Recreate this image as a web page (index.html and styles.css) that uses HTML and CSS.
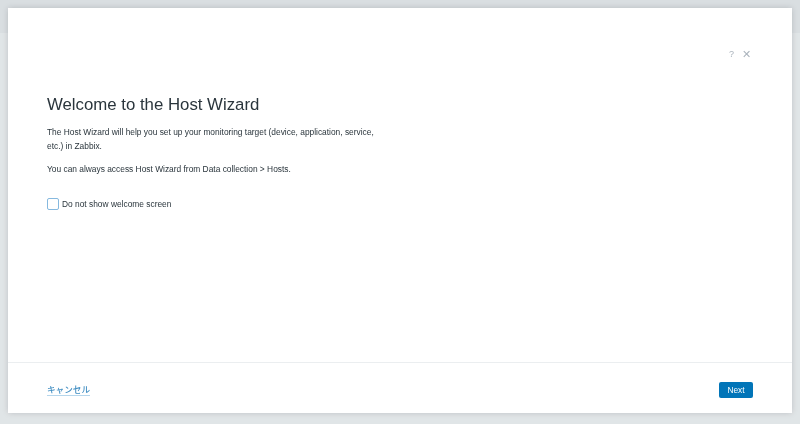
FILE: index.html
```html
<!DOCTYPE html>
<html lang="en">
<head>
    <meta charset="UTF-8">
    <meta name="viewport" content="width=device-width, initial-scale=1.0">
    <title>Host Wizard</title>
    <link rel="stylesheet" href="styles.css">
</head>
<body>
    <div class="page-bg">
        <div class="page-top"></div>
    </div>

    <!-- Wizard dialog -->
    <div class="overlay">
        <div class="dialog">
            <div class="dialog-head">
                <span class="head-btn help">?</span>
                <span class="head-btn close">&#x2715;</span>
            </div>
            <div class="dialog-body">
                <h1>Welcome to the Host Wizard</h1>
                <p>The Host Wizard will help you set up your monitoring target (device, application, service, etc.) in Zabbix.</p>
                <p>You can always access Host Wizard from Data collection &gt; Hosts.</p>
                <label class="check">
                    <span class="box"></span>
                    Do not show welcome screen
                </label>
            </div>
            <div class="dialog-foot">
                <a class="cancel" href="#">キャンセル</a>
                <button class="next">Next</button>
            </div>
        </div>
    </div>
</body>
</html>
```

FILE: styles.css
```css
body {
    margin: 0;
    padding: 0;
    font-family: "Liberation Sans", Arial, sans-serif;
    background-color: #e9ecee;
}
.page-bg {
    height: 424px;
}
.page-top {
    height: 33px;
    background-color: #dfe3e6;
}
/* Dialog */
.overlay {
    position: fixed;
    left: 0;
    top: 0;
    width: 100%;
    height: 100%;
    padding: 8px;
    box-sizing: border-box;
    background-color: rgba(200, 206, 212, 0.25);
}
.dialog {
    height: 405px;
    background-color: #ffffff;
    box-shadow: 0 0 6px rgba(0, 0, 0, 0.15);
    display: flex;
    flex-direction: column;
}
.dialog-head {
    display: flex;
    justify-content: flex-end;
    align-items: center;
    gap: 8px;
    padding: 40px 41px 0 0;
    height: 12px;
}
.head-btn {
    color: #aab3bc;
    font-size: 9px;
}
.head-btn.close {
    font-size: 10.5px;
}
.dialog-body {
    flex: 1;
    padding: 35px 39px 0 39px;
}
h1 {
    margin: 0 0 10px;
    font-size: 16.8px;
    font-weight: normal;
    color: #2a353c;
}
p {
    width: 340px;
    margin: 0 0 9px;
    font-size: 8.4px;
    line-height: 14px;
    color: #2a353c;
}
.check {
    display: flex;
    align-items: center;
    gap: 3px;
    margin-top: 22px;
    font-size: 8.4px;
    color: #2a353c;
}
.box {
    width: 10px;
    height: 10px;
    border: 1px solid #86b9df;
    border-radius: 2px;
}
.dialog-foot {
    height: 50px;
    border-top: 1px solid #ebeef0;
    display: flex;
    justify-content: space-between;
    align-items: center;
    padding: 0 39px;
}
.cancel {
    font-family: "Noto Sans CJK JP", sans-serif;
    font-size: 8.6px;
    font-weight: 500;
    color: #3f8dc2;
    text-decoration: none;
    border-bottom: 1px solid #b5d6ec;
    padding-top: 2px;
}
.next {
    width: 34px;
    height: 16px;
    padding: 0;
    border: none;
    border-radius: 2px;
    background-color: #0275b8;
    color: #ffffff;
    font-family: "Liberation Sans", Arial, sans-serif;
    font-size: 8.4px;
    margin-top: 4px;
}
```
